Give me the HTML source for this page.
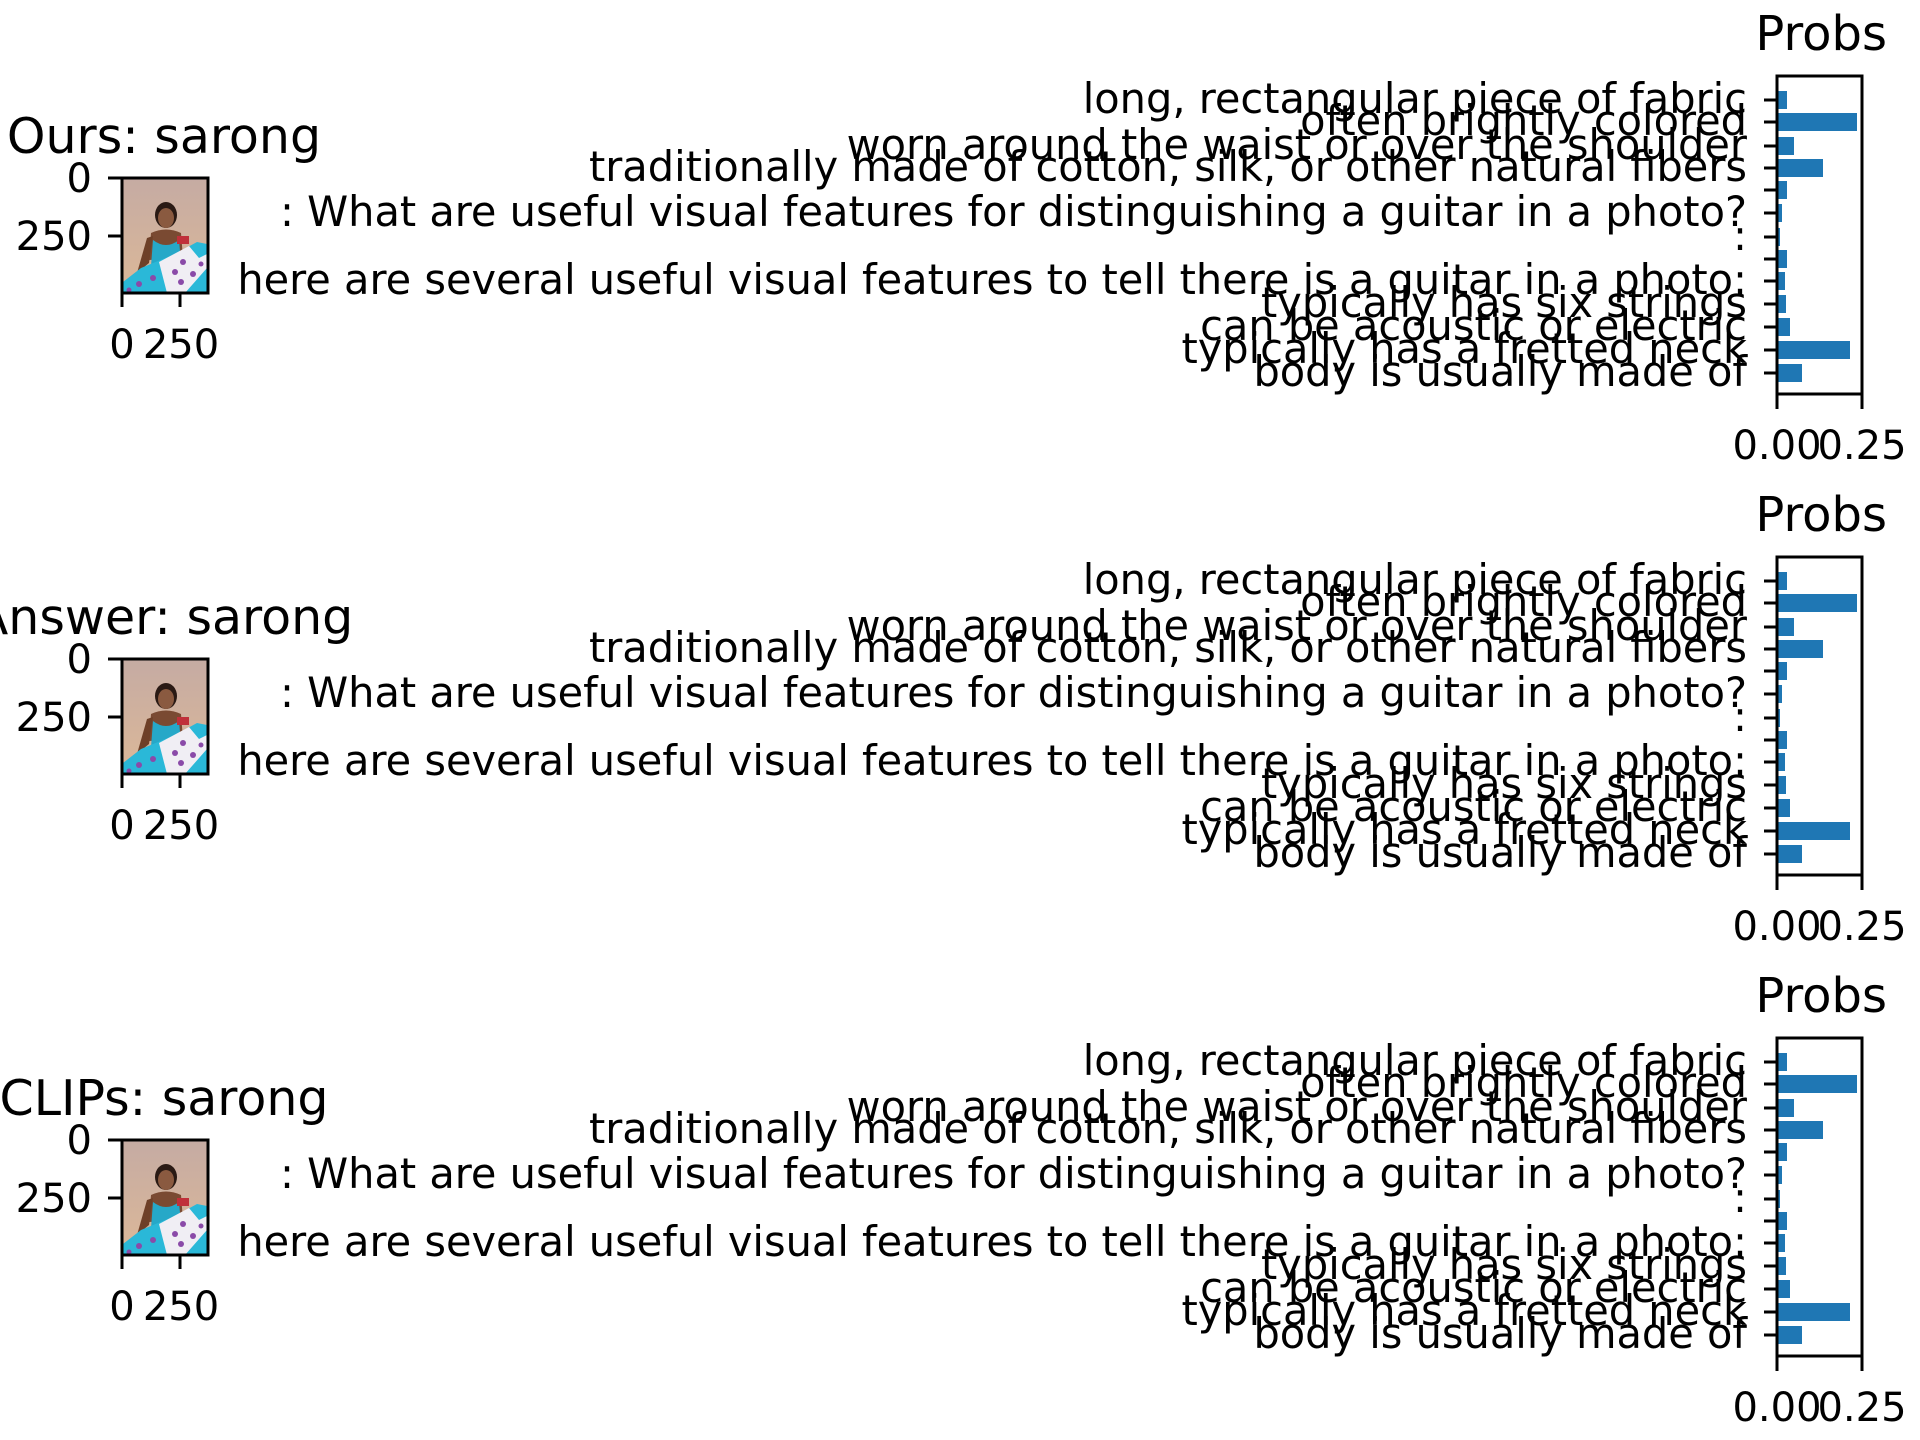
<!DOCTYPE html>
<html><head><meta charset="utf-8"><style>
html,body{margin:0;padding:0;background:#fff;}
svg{display:block;}
text{font-family:"DejaVu Sans","Liberation Sans",sans-serif;fill:#000;}
</style></head><body>
<svg width="1920" height="1440" viewBox="0 0 1920 1440" xmlns="http://www.w3.org/2000/svg">
<defs>
<linearGradient id="bg" x1="0" y1="0" x2="0" y2="1"><stop offset="0" stop-color="#c5aba3"/><stop offset="1" stop-color="#dcb898"/></linearGradient>
<g id="photo">
  <rect x="0" y="0" width="84" height="115" fill="url(#bg)"/>
  <ellipse cx="43" cy="37" rx="11" ry="13" fill="#2a1a14"/>
  <ellipse cx="43" cy="40" rx="8" ry="10" fill="#8a5a40"/>
  <path d="M28 55 Q43 48 58 55 L60 80 L26 82 Z" fill="#7a4a32"/>
  <path d="M14 95 L24 60 L30 58 L26 85 Z" fill="#6e4028"/>
  <path d="M30 62 Q43 72 56 62 L58 84 L28 88 Z" fill="#26a8c8"/>
  <rect x="54" y="58" width="12" height="8" fill="#c0303a"/>
  <path d="M0 104 L18 90 L52 76 L74 64 L84 66 L84 115 L0 115 Z" fill="#2ab8d8"/>
  <path d="M36 84 L66 68 L76 80 L84 76 L84 90 L62 115 L44 115 Z" fill="#f0eef4"/>
  <circle cx="52" cy="94" r="3" fill="#8a4aa8"/><circle cx="60" cy="84" r="3" fill="#8a4aa8"/>
  <circle cx="58" cy="104" r="3" fill="#8a4aa8"/><circle cx="70" cy="96" r="3" fill="#8a4aa8"/>
  <circle cx="30" cy="100" r="3" fill="#8a4aa8"/><circle cx="16" cy="106" r="3" fill="#8a4aa8"/>
  <circle cx="78" cy="86" r="2.5" fill="#8a4aa8"/><circle cx="6" cy="112" r="2.5" fill="#8a4aa8"/>
</g>
<g id="panel">
  <use href="#photo" x="123" y="178"/>
  <rect x="122" y="178" width="86" height="115" fill="none" stroke="#000" stroke-width="3"/>
  <line x1="108" y1="178" x2="122" y2="178" stroke="#000" stroke-width="3"/>
  <line x1="108" y1="236" x2="122" y2="236" stroke="#000" stroke-width="3"/>
  <line x1="122" y1="293" x2="122" y2="307" stroke="#000" stroke-width="3"/>
  <line x1="180" y1="293" x2="180" y2="307" stroke="#000" stroke-width="3"/>
  <text x="92" y="192" font-size="40" text-anchor="end">0</text>
  <text x="92" y="250" font-size="40" text-anchor="end">250</text>
  <text x="122" y="358" font-size="40" text-anchor="middle">0</text>
  <text x="181" y="358" font-size="40" text-anchor="middle">250</text>
  <g fill="#1f77b4">
    <rect x="1777" y="91" width="10" height="18"/>
    <rect x="1777" y="113" width="80" height="18"/>
    <rect x="1777" y="137" width="17" height="18"/>
    <rect x="1777" y="159" width="46" height="18"/>
    <rect x="1777" y="181" width="10" height="18"/>
    <rect x="1777" y="204" width="5" height="18"/>
    <rect x="1777" y="228" width="3" height="18"/>
    <rect x="1777" y="250" width="10" height="18"/>
    <rect x="1777" y="272" width="8" height="18"/>
    <rect x="1777" y="295" width="9" height="18"/>
    <rect x="1777" y="318" width="13" height="18"/>
    <rect x="1777" y="341" width="73" height="18"/>
    <rect x="1777" y="364" width="25" height="18"/>
  </g>
  <rect x="1777" y="76" width="85" height="318" fill="none" stroke="#000" stroke-width="3"/>
  <g stroke="#000" stroke-width="3">
    <line x1="1764" y1="100" x2="1777" y2="100"/><line x1="1764" y1="122" x2="1777" y2="122"/>
    <line x1="1764" y1="146" x2="1777" y2="146"/><line x1="1764" y1="168" x2="1777" y2="168"/>
    <line x1="1764" y1="190" x2="1777" y2="190"/><line x1="1764" y1="213" x2="1777" y2="213"/>
    <line x1="1764" y1="237" x2="1777" y2="237"/><line x1="1764" y1="259" x2="1777" y2="259"/>
    <line x1="1764" y1="281" x2="1777" y2="281"/><line x1="1764" y1="304" x2="1777" y2="304"/>
    <line x1="1764" y1="327" x2="1777" y2="327"/><line x1="1764" y1="350" x2="1777" y2="350"/>
    <line x1="1764" y1="373" x2="1777" y2="373"/>
    <line x1="1777" y1="394" x2="1777" y2="409"/><line x1="1862" y1="394" x2="1862" y2="409"/>
  </g>
  <g font-size="41.5" text-anchor="end">
    <text x="1747" y="113">long, rectangular piece of fabric</text>
    <text x="1747" y="135">often brightly colored</text>
    <text x="1747" y="159">worn around the waist or over the shoulder</text>
    <text x="1747" y="181">traditionally made of cotton, silk, or other natural fibers</text>
    <text x="1747" y="226">: What are useful visual features for distinguishing a guitar in a photo?</text>
    <text x="1747" y="250">:</text>
    <text x="1747" y="294">here are several useful visual features to tell there is a guitar in a photo:</text>
    <text x="1747" y="317">typically has six strings</text>
    <text x="1747" y="340">can be acoustic or electric</text>
    <text x="1747" y="363">typically has a fretted neck</text>
    <text x="1747" y="386">body is usually made of</text>
  </g>
  <text x="1777" y="459" font-size="40" text-anchor="middle">0.00</text>
  <text x="1862" y="459" font-size="40" text-anchor="middle">0.25</text>
  <text x="1887" y="50" font-size="48" text-anchor="end">Probs</text>
</g>
</defs>
<use href="#panel" x="0" y="0"/>
<use href="#panel" x="0" y="481"/>
<use href="#panel" x="0" y="962"/>
<g font-size="49" text-anchor="middle">
  <text x="164" y="153">Ours: sarong</text>
  <text x="164" y="634">Answer: sarong</text>
  <text x="164" y="1115">CLIPs: sarong</text>
</g>
</svg>
</body></html>
